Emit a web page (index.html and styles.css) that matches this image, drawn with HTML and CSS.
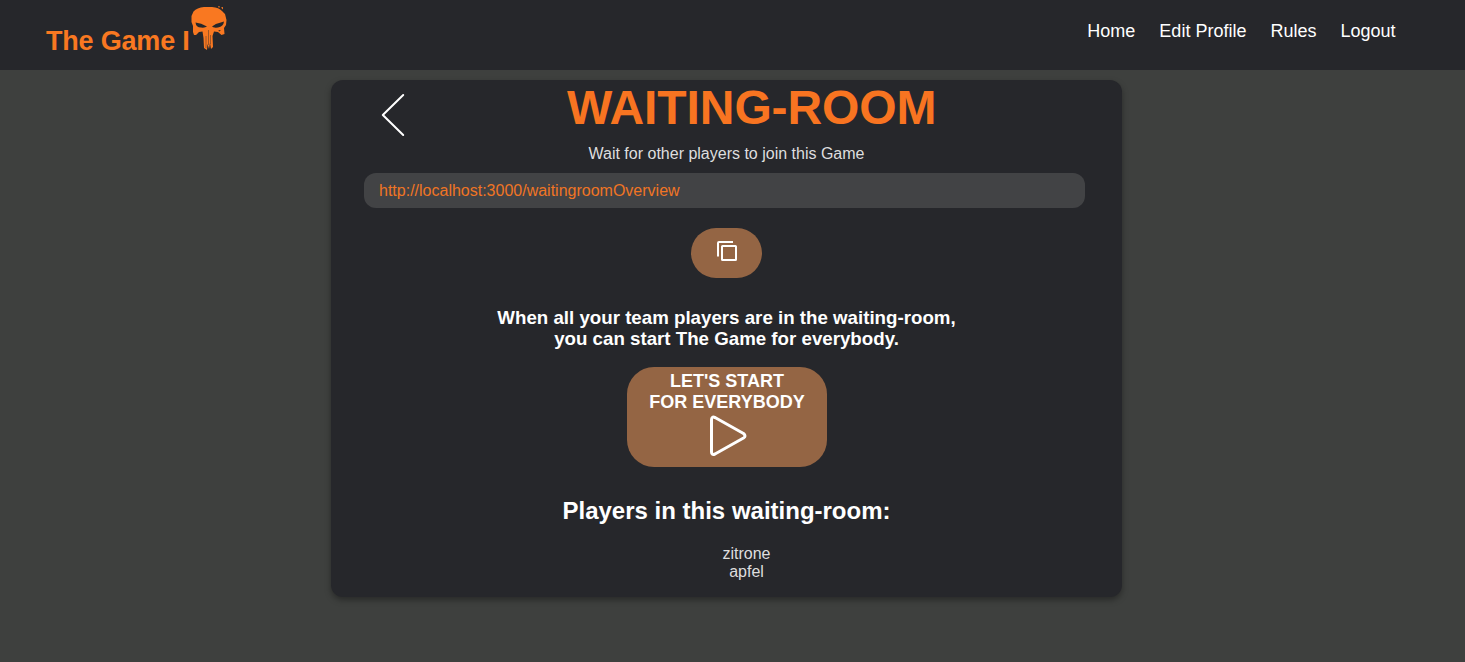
FILE: index.html
```html
<!DOCTYPE html>
<html lang="en">
<head>
<meta charset="utf-8">
<title>The Game</title>
<link rel="stylesheet" href="styles.css">
</head>
<body>
<header class="header">
  <div class="brand">
    <span class="brand-name">The Game I</span>
    <svg class="skull" viewBox="0 0 38 46" width="38" height="46">
      <path fill="#f97821" d="M3 20 L1.500 16 L1.500 10 L3.500 5.500 Q7 1.500 14 1 L22 1 Q29 1.500 32 5 L35 8 L36.500 14 L36 19 L34 22 L34.500 28 L31.500 29 L28 26 L24 25.500 L22.500 30 L23 41 L21 43 L20 37 L19 43 L17.500 38 L17 44 L14 42 L13.500 32 L12.500 25.500 L9 26 L6 29 L4 29 L3 26 Z M28 0 L30 .5 L29 2 Z M31 1.500 L33 1 L33 3.500 Z"/>
      <path fill="#26272b" d="M5.500 16.500 Q11 17 17 20.500 Q15 22 11 21.500 Q6 21.500 5.500 16.500 Z M34 15.500 Q27 17 22 20.500 Q23 22 28 21.500 Q33.500 20.500 34 15.500 Z M28.500 24 L31 24.500 L29 25.500 Z"/>
      <path fill="none" stroke="#26272b" stroke-opacity=".7" stroke-width=".6" d="M16 30 V42 M18.500 24 V39 M20.500 29 V38"/>
    </svg>
  </div>
  <nav class="nav">
    <a>Home</a>
    <a>Edit Profile</a>
    <a>Rules</a>
    <a>Logout</a>
  </nav>
</header>
<main class="card">
  <div class="card-head">
    <svg class="back" viewBox="0 0 24 44" width="24" height="44"><path fill="none" stroke="#fff" stroke-width="2" stroke-linecap="round" stroke-linejoin="round" d="M22.200 2 L1.800 22 L22.200 42"/></svg>
    <h1 class="title">WAITING-ROOM</h1>
  </div>
  <p class="subtitle">Wait for other players to join this Game</p>
  <div class="link">http://localhost:3000/waitingroomOverview</div>
  <button class="copy" aria-label="Copy">
    <svg viewBox="0 0 20 21" width="20" height="21"><g fill="none" stroke="#fff" stroke-width="2"><path d="M1 15.500 V2 Q1 1 2 1 H16"/><rect x="5" y="5" width="14" height="14" rx=".6"/></g></svg>
  </button>
  <p class="hint">When all your team players are in the waiting-room,<br>you can start The Game for everybody.</p>
  <button class="start">
    <span>LET'S START<br>FOR EVERYBODY</span>
    <svg viewBox="0 0 38 42" width="38" height="42"><path fill="none" stroke="#fff" stroke-width="3" stroke-linejoin="round" d="M2.500 5 Q2.500 1 6 2.500 L34.500 18.500 Q37.500 21 34.500 23 L6 39 Q2.500 40.500 2.500 37 Z"/></svg>
  </button>
  <h2 class="players-title">Players in this waiting-room:</h2>
  <ul class="players">
    <li>zitrone</li>
    <li>apfel</li>
  </ul>
</main>
</body>
</html>
```
FILE: styles.css
```css
* { box-sizing: border-box; }
body {
  margin: 0;
  height: 662px;
  overflow: hidden;
  background: #3e403e;
  color: #fff;
  font-family: "Liberation Sans", Arial, sans-serif;
}
h1, h2, p, ul { margin: 0; padding: 0; }
.header {
  display: flex;
  justify-content: space-between;
  align-items: flex-start;
  height: 70px;
  padding: 6px 69.5px 0 46px;
  background: #26272b;
}
.brand { display: flex; align-items: flex-start; }
.brand-name {
  width: 144px;
  padding-top: 19px;
  font-size: 27px;
  line-height: 32px;
  font-weight: bold;
  letter-spacing: -.2px;
  white-space: nowrap;
  color: #f97821;
}
.nav {
  display: flex;
  gap: 24px;
  padding-top: 15px;
  font-size: 18px;
  line-height: 21px;
}
.card {
  display: flex;
  flex-direction: column;
  align-items: center;
  width: 791px;
  height: 517px;
  margin: 10px 0 0 331px;
  border-radius: 12px;
  background: #26272b;
  box-shadow: 0 3px 6px rgba(0, 0, 0, .35);
}
.card-head {
  display: flex;
  align-items: flex-start;
  width: 100%;
  height: 56px;
  padding-left: 50px;
}
.back { margin-top: 13px; }
.title {
  margin-left: 162px;
  font-size: 48px;
  line-height: 56px;
  letter-spacing: -.1px;
  color: #f87421;
}
.subtitle {
  margin-top: 8px;
  font-size: 16px;
  line-height: 19px;
  color: #dededf;
}
.link {
  width: 721px;
  height: 35px;
  margin: 10px 4px 0 0;
  padding-left: 15px;
  border-radius: 12px;
  background: #424345;
  color: #f07524;
  font-size: 16px;
  line-height: 35px;
}
button {
  display: flex;
  flex-direction: column;
  align-items: center;
  padding: 0;
  border: 0;
  background: #946544;
  color: #fff;
  font: bold 18px/21px "Liberation Sans", Arial, sans-serif;
}
.copy {
  width: 71px;
  height: 50px;
  margin-top: 20px;
  padding-top: 13px;
  border-radius: 25px;
}
.hint {
  margin-top: 29px;
  font-size: 18.72px;
  line-height: 21px;
  font-weight: bold;
  text-align: center;
}
.start {
  width: 200px;
  height: 100px;
  margin: 18px 0 0 1px;
  padding-top: 4px;
  border-radius: 27px;
}
.start svg { margin: 2px 0 0 2px; }
.players-title {
  margin-top: 30px;
  font-size: 24px;
  line-height: 28px;
}
.players {
  margin-top: 20px;
  padding-left: 40px;
  list-style: none;
  text-align: center;
  font-size: 16px;
  line-height: 18px;
  color: #dededf;
}
```
